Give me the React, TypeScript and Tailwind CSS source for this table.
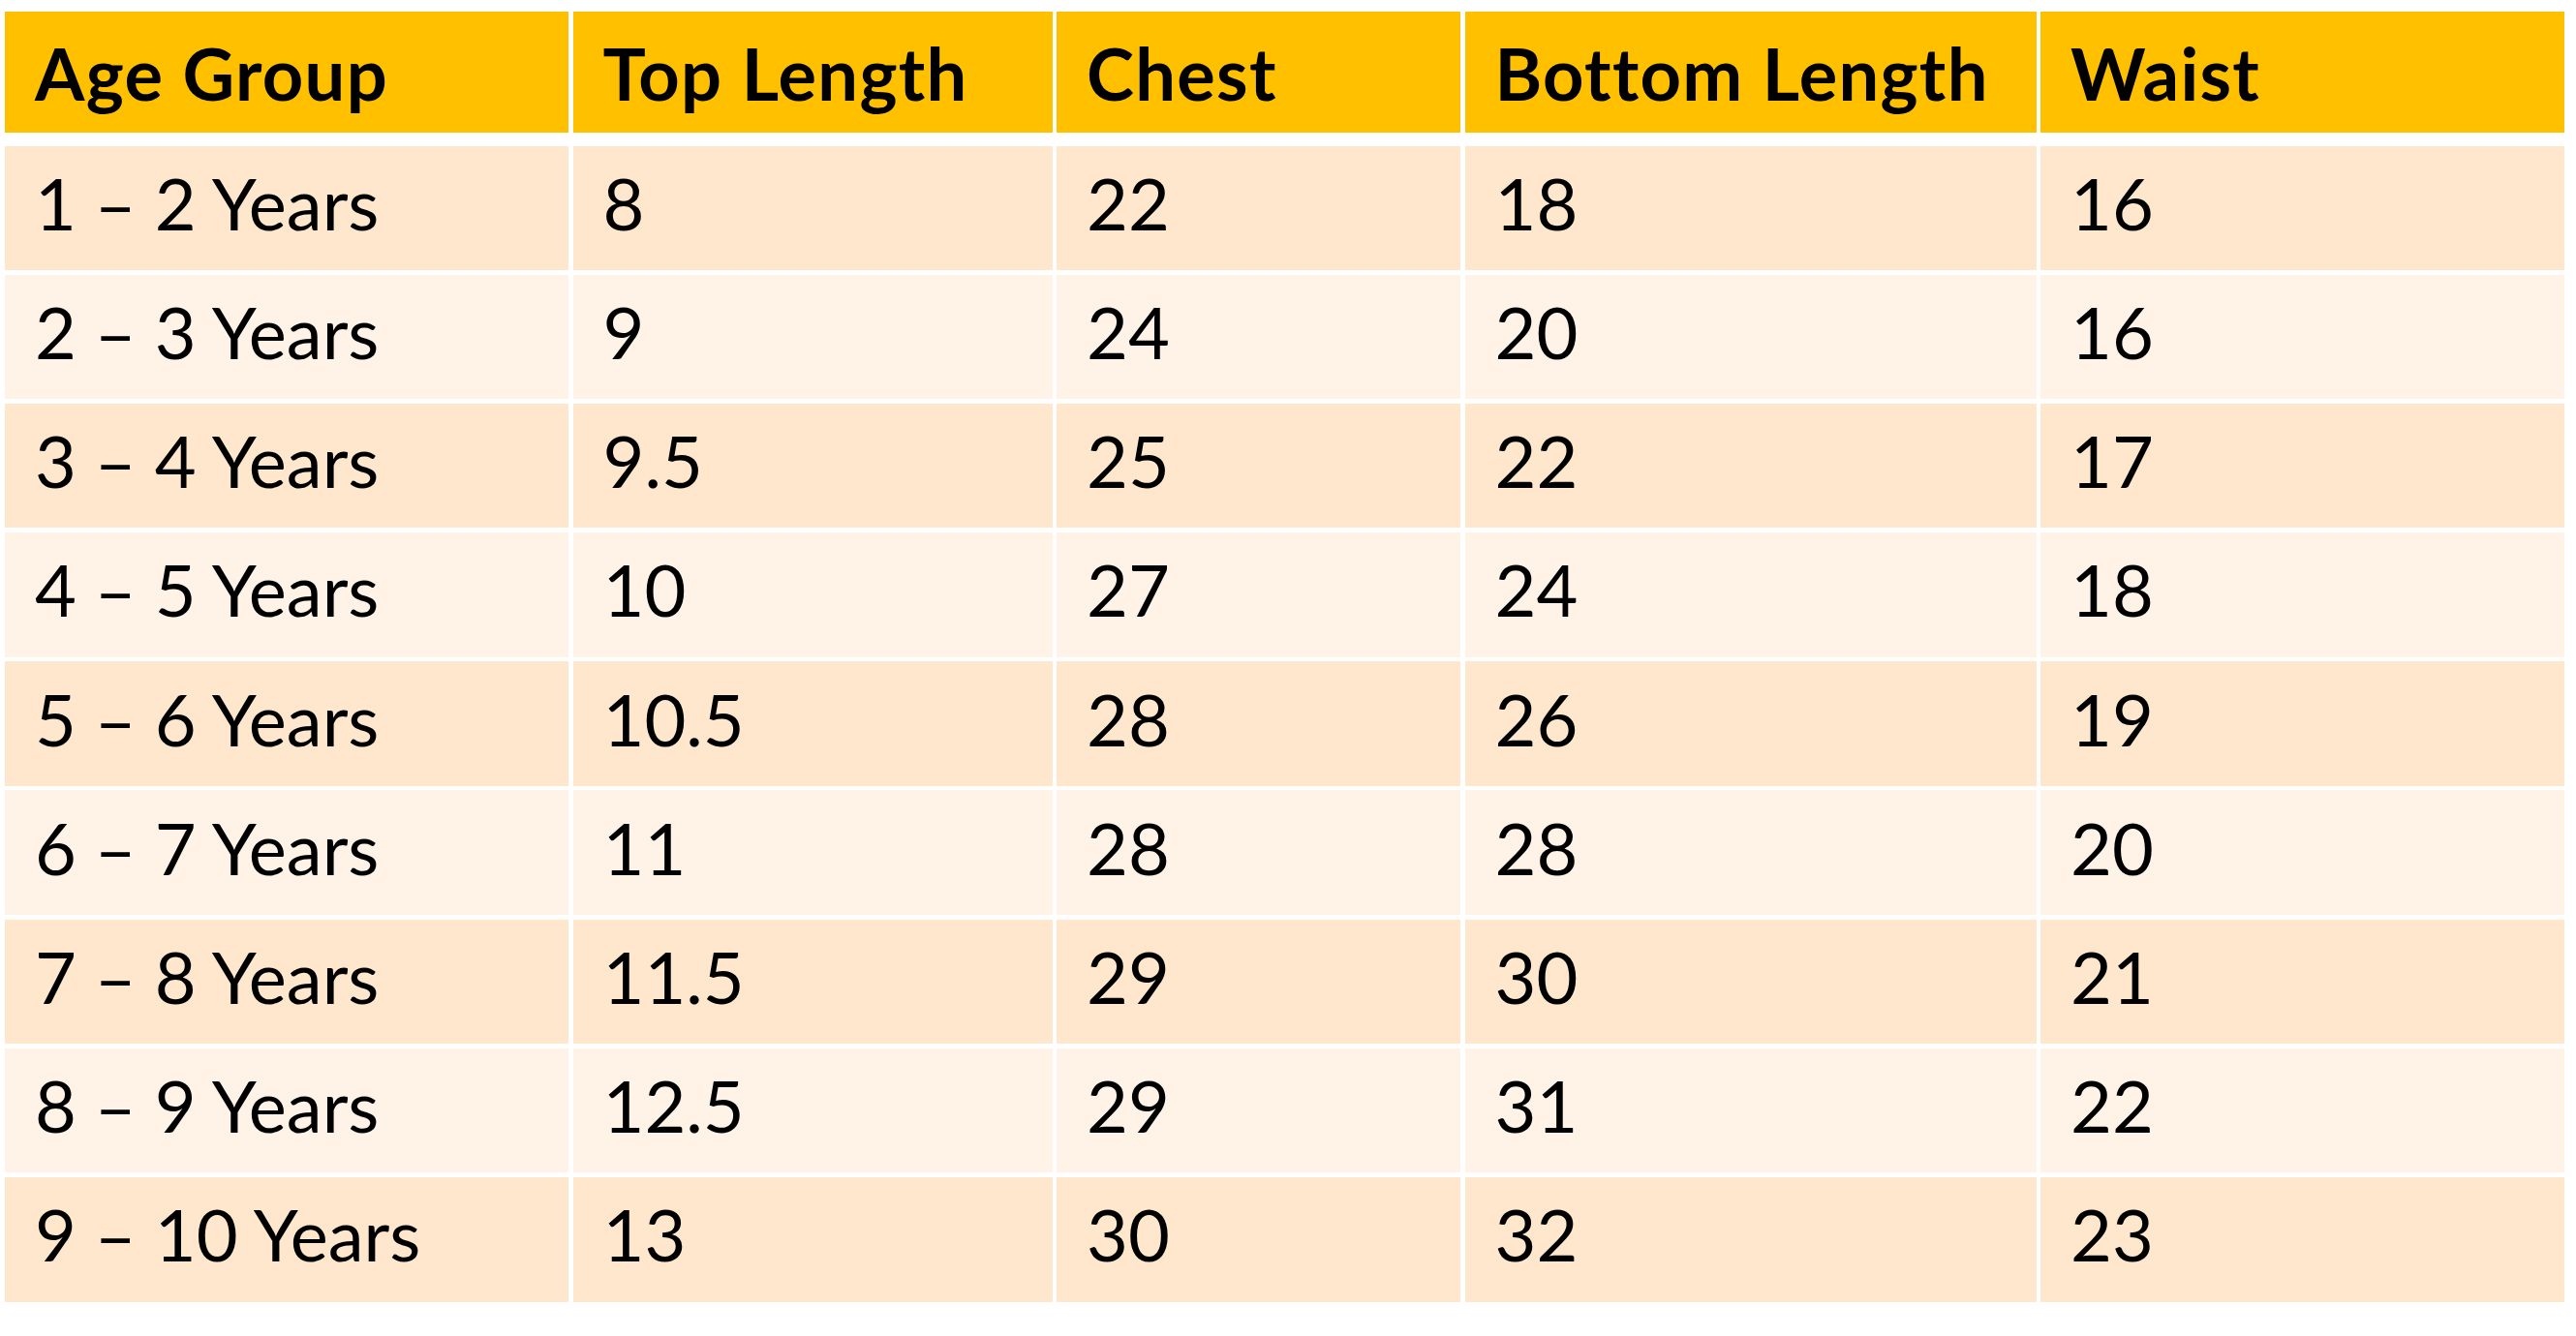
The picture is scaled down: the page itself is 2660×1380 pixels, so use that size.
const headers = ["Age Group", "Top Length", "Chest", "Bottom Length", "Waist"];

const rows = [
  ["1 – 2 Years", "8", "22", "18", "16"],
  ["2 – 3 Years", "9", "24", "20", "16"],
  ["3 – 4 Years", "9.5", "25", "22", "17"],
  ["4 – 5 Years", "10", "27", "24", "18"],
  ["5 – 6 Years", "10.5", "28", "26", "19"],
  ["6 – 7 Years", "11", "28", "28", "20"],
  ["7 – 8 Years", "11.5", "29", "30", "21"],
  ["8 – 9 Years", "12.5", "29", "31", "22"],
  ["9 – 10 Years", "13", "30", "32", "23"],
];

const cols = "grid grid-cols-[582px_495px_417px_590px_541px] gap-x-[4.5px]";

function App() {
  return (
    <div className="w-[2660px] h-[1380px] bg-white pt-[12px] pl-[5px] font-['Lato','Noto_Sans',sans-serif] text-black">
      {/* header row */}
      <div className={cols}>
        {headers.map((h) => (
          <div
            key={h}
            className="h-[125px] bg-[#FFC000] flex items-center pl-[31px] pt-[3px] text-[74px] font-bold tracking-[1.3px] leading-none"
          >
            {h}
          </div>
        ))}
      </div>

      <div className="mt-[13.5px] flex flex-col gap-y-[4.7px]">
        {rows.map((r, i) => (
          <div key={i} className={cols}>
            {r.map((c, j) => (
              <div
                key={j}
                className={`h-[128.5px] flex items-center pl-[31px] pb-[10px] text-[74px] leading-none ${
                  i % 2 === 0 ? "bg-[#FFE7CE]" : "bg-[#FFF3E7]"
                }`}
              >
                {c}
              </div>
            ))}
          </div>
        ))}
      </div>
    </div>
  );
}

export default App;
